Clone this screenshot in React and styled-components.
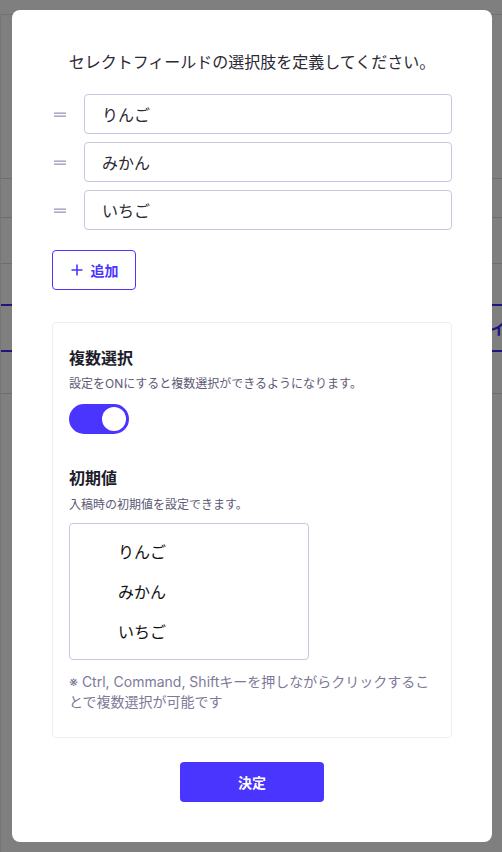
import React, { useState } from 'react'
import styled, { createGlobalStyle } from 'styled-components'

const GlobalStyle = createGlobalStyle`
  html, body {
    margin: 0;
    padding: 0;
    background: #fff;
  }
  body {
    font-family: Inter, "Noto Sans CJK JP", "Noto Sans", sans-serif;
    color: #222;
  }
  * {
    box-sizing: border-box;
  }
`

const options = ['りんご', 'みかん', 'いちご']

const DragHandle = () => (
  <HandleBox aria-hidden="true">
    <svg width="12" height="6" viewBox="0 0 12 6">
      <rect x="0" y="0.5" width="12" height="1.3" fill="#9896b8" />
      <rect x="0" y="3.5" width="12" height="1.3" fill="#9896b8" />
    </svg>
  </HandleBox>
)

const App = () => {
  const [multi, setMulti] = useState(true)

  return (
    <>
      <GlobalStyle />
      <Page>
        <Backdrop>
          <Header />
          <BackBody>
            <SideRule />
            <BackMain>
              <BackRow $h={164} $line />
              <BackRow $h={39} $line />
              <BackRow $h={46} $line />
              <BackRow $h={40} />
              <BackTab>イ</BackTab>
              <BackRow $h={42} $line />
            </BackMain>
          </BackBody>
        </Backdrop>

        <Overlay>
          <Modal>
            <Title>セレクトフィールドの選択肢を定義してください。</Title>

            <OptionList>
              {options.map((o) => (
                <OptionRow key={o}>
                  <DragHandle />
                  <TextInput defaultValue={o} />
                </OptionRow>
              ))}
            </OptionList>

            <AddButton type="button">
              <svg width="12" height="12" viewBox="0 0 12 12">
                <path d="M6 0.5v11M0.5 6h11" stroke="currentColor" strokeWidth="1.6" />
              </svg>
              追加
            </AddButton>

            <Panel>
              <SectionTitle>複数選択</SectionTitle>
              <SectionDesc>設定をONにすると複数選択ができるようになります。</SectionDesc>
              <Toggle
                type="button"
                role="switch"
                aria-checked={multi}
                $on={multi}
                onClick={() => setMulti(!multi)}
              >
                <Knob $on={multi} />
              </Toggle>

              <SectionTitle $top={32}>初期値</SectionTitle>
              <SectionDesc $gap={6}>入稿時の初期値を設定できます。</SectionDesc>
              <ListBox role="listbox" aria-multiselectable="true">
                {options.map((o) => (
                  <ListOption key={o} role="option">{o}</ListOption>
                ))}
              </ListBox>
              <Note>※ Ctrl, Command, Shiftキーを押しながらクリックすることで複数選択が可能です</Note>
            </Panel>

            <Footer>
              <SubmitButton type="button">決定</SubmitButton>
            </Footer>
          </Modal>
        </Overlay>
      </Page>
    </>
  )
}

export default App

const Page = styled.div`
  position: relative;
  width: 502px;
  height: 852px;
  overflow: hidden;
`

const Backdrop = styled.div`
  display: flex;
  flex-direction: column;
  height: 100%;
  background: #fff;
`

const Header = styled.div`
  height: 15px;
  border-bottom: 1px solid #e4e4e4;
`

const BackBody = styled.div`
  display: flex;
  flex: 1;
`

const SideRule = styled.div`
  width: 7px;
  border-right: 1px solid #eaeaea;
`

const BackMain = styled.div`
  flex: 1;
  display: flex;
  flex-direction: column;
`

const BackRow = styled.div`
  flex-shrink: 0;
  height: ${({ $h }) => $h}px;
  border-bottom: ${({ $line }) => ($line ? '1px solid #dcdcdc' : 'none')};
`

const BackTab = styled.div`
  flex-shrink: 0;
  height: 48px;
  border-bottom: 2px solid #3d2bff;
  border-top: 2px solid #3d2bff;
  display: flex;
  align-items: center;
  padding-left: 489px;
  color: #3d2bff;
  font-size: 16px;
  font-weight: 700;
  overflow: hidden;
  white-space: nowrap;
`

const Overlay = styled.div`
  position: absolute;
  inset: 0;
  background: rgba(0, 0, 0, 0.5);
  padding: 10px 10px 10px 12px;
  display: flex;
  align-items: flex-start;
`

const Modal = styled.div`
  width: 480px;
  height: 832px;
  background: #fff;
  border-radius: 8px;
  padding: 40px 40px;
  display: flex;
  flex-direction: column;
`

const Title = styled.h2`
  margin: 0 0 20px;
  font-size: 16px;
  line-height: 24px;
  font-weight: 400;
  color: #2b2a35;
  text-align: center;
`

const OptionList = styled.div`
  display: flex;
  flex-direction: column;
  gap: 8px;
`

const OptionRow = styled.div`
  display: flex;
  align-items: center;
  gap: 16px;
`

const HandleBox = styled.span`
  width: 16px;
  height: 40px;
  display: flex;
  align-items: center;
  justify-content: center;
  padding-top: 2px;
`

const TextInput = styled.input`
  flex: 1;
  height: 40px;
  border: 1px solid #c9c6e0;
  border-radius: 4px;
  padding: 0 17px;
  font-family: inherit;
  font-size: 16px;
  color: #2b2a35;
  background: #fff;
  outline: none;
`

const AddButton = styled.button`
  align-self: flex-start;
  margin-top: 20px;
  width: 84px;
  height: 40px;
  display: flex;
  align-items: center;
  justify-content: center;
  gap: 8px;
  border: 1px solid #4a35ff;
  border-radius: 4px;
  background: #fff;
  color: #4a35ff;
  font-family: inherit;
  font-size: 14px;
  font-weight: 700;
  padding: 0 0 0 1px;
  cursor: pointer;
`

const Panel = styled.section`
  margin-top: 32px;
  height: 416px;
  border: 1px solid #efeef6;
  border-radius: 4px;
  padding: 23px 16px 24px;
  display: flex;
  flex-direction: column;
`

const SectionTitle = styled.h3`
  margin: ${({ $top }) => $top || 0}px 0 0;
  font-size: 16px;
  line-height: 24px;
  font-weight: 700;
  color: #1d1c2b;
`

const SectionDesc = styled.p`
  margin: ${({ $gap }) => $gap || 5}px 0 0;
  font-size: 12px;
  line-height: 18px;
  color: #5c5a74;
`

const Toggle = styled.button`
  margin-top: 11px;
  width: 60px;
  height: 30px;
  border: none;
  border-radius: 15px;
  padding: 3px;
  background: ${({ $on }) => ($on ? '#4a35ff' : '#c9c6e0')};
  display: flex;
  justify-content: ${({ $on }) => ($on ? 'flex-end' : 'flex-start')};
  cursor: pointer;
`

const Knob = styled.span`
  width: 24px;
  height: 24px;
  border-radius: 50%;
  background: #fff;
`

const ListBox = styled.div`
  margin-top: 9px;
  width: 240px;
  height: 137px;
  border: 1px solid #c9c6e0;
  border-radius: 4px;
  padding: 7px 0 0;
  display: flex;
  flex-direction: column;
`

const ListOption = styled.div`
  height: 40px;
  display: flex;
  align-items: center;
  padding-left: 48px;
  font-size: 16px;
  color: #111;
  cursor: default;
`

const Note = styled.p`
  margin: 12px 0 0;
  font-size: 14px;
  line-height: 20px;
  color: #7d7a98;
`

const Footer = styled.div`
  margin-top: 24px;
  display: flex;
  justify-content: center;
`

const SubmitButton = styled.button`
  width: 144px;
  height: 40px;
  border: none;
  border-radius: 4px;
  background: #4a35ff;
  color: #fff;
  font-family: inherit;
  font-size: 14px;
  font-weight: 700;
  cursor: pointer;
`
